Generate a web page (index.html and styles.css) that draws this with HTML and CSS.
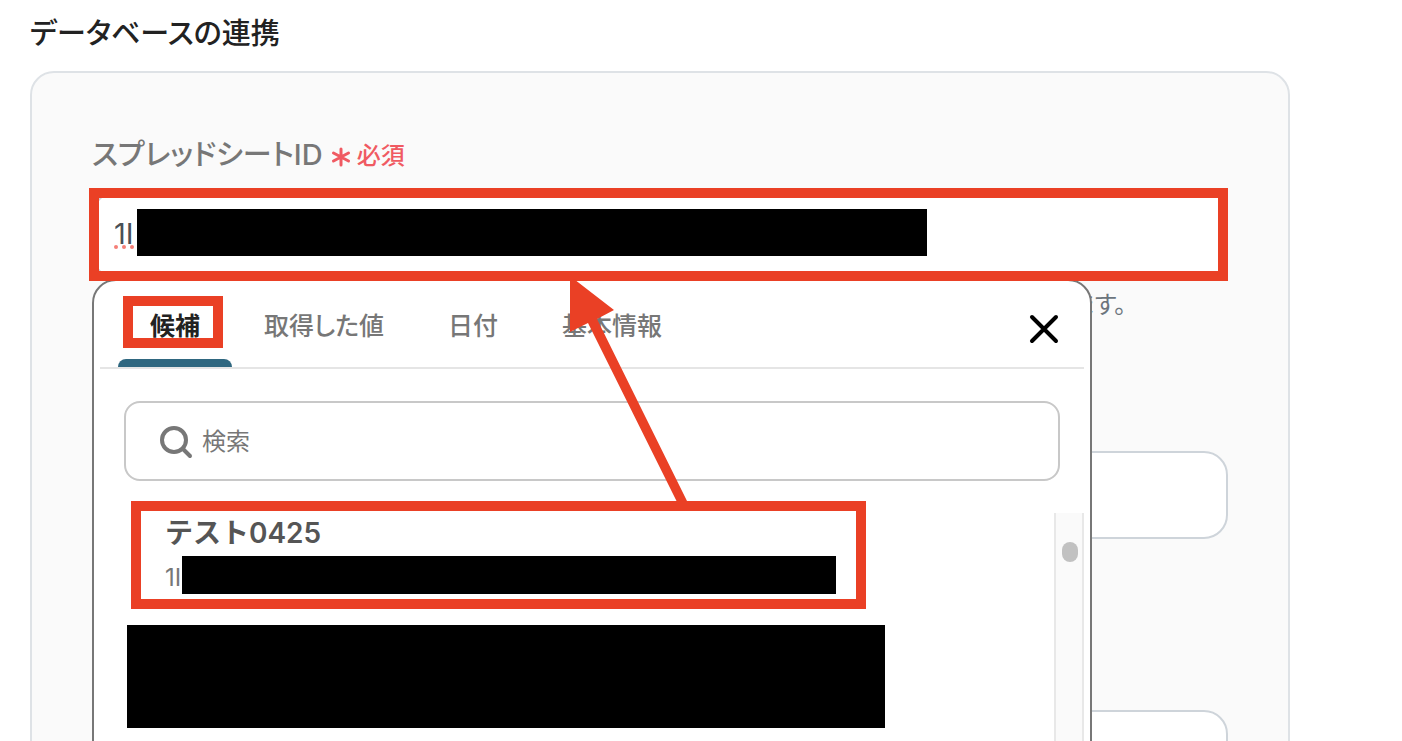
FILE: index.html
```html
<!DOCTYPE html>
<html lang="ja">
<head>
<meta charset="utf-8">
<meta name="viewport" content="width=device-width, initial-scale=1">
<title>データベースの連携</title>
<link rel="stylesheet" href="styles.css">
</head>
<body>
<main class="page">
  <h1 class="page-title">データベースの連携</h1>
  <form class="card">
    <div class="field field-sheet">
      <div class="field-head">
        <label class="field-label" for="sheet-id">スプレッドシートID</label>
        <span class="required">
          <svg class="required-icon" viewBox="0 0 20 20" aria-hidden="true"><path d="M10 2v16M2.5 6l15 8M17.5 6l-15 8"/></svg>
          必須
        </span>
      </div>
      <div class="control">
        <input class="input" id="sheet-id" type="text" value="1I" spellcheck="false">
        <svg class="spell-dots" viewBox="0 0 24 4" aria-hidden="true"><circle cx="4" cy="2" r="2"/><circle cx="12" cy="2" r="2"/><circle cx="20" cy="2" r="2"/></svg>
        <span class="mask mask-input"></span>

        <section class="popup" aria-label="候補">
          <header class="popup-head">
            <div class="tabs" role="tablist">
              <button class="tab tab-active" type="button" role="tab" aria-selected="true">候補</button>
              <button class="tab" type="button" role="tab">取得した値</button>
              <button class="tab" type="button" role="tab">日付</button>
              <button class="tab" type="button" role="tab">基本情報</button>
            </div>
            <button class="close" type="button" aria-label="閉じる">
              <svg class="close-icon" viewBox="0 0 32 32" aria-hidden="true"><path d="M4 4l24 24M28 4L4 28"/></svg>
            </button>
          </header>
          <div class="search">
            <svg class="search-icon" viewBox="0 0 34 34" aria-hidden="true"><circle cx="15" cy="15" r="12"/><path d="M24 24l7 7"/></svg>
            <input class="search-input" type="search" placeholder="検索" aria-label="検索">
          </div>
          <div class="results">
            <ul class="result-list">
              <li><button class="result" type="button">
                <span class="result-name">テスト0425</span>
                <span class="result-id">1I<span class="mask mask-id"></span></span>
              </button></li>
              <li class="mask mask-row"></li>
            </ul>
            <div class="scrollbar"><div class="thumb"></div></div>
          </div>
        </section>

        <span class="mark mark-input"></span>
        <span class="mark mark-tab"></span>
        <span class="mark mark-result"></span>
        <svg class="arrow" viewBox="0 0 120 230" aria-hidden="true"><path d="M0 6L44 40L27 49L117 231L107 232L18 53L0 62Z"/></svg>
      </div>
      <p class="help">ます。</p>
    </div>
    <div class="field"><input class="input" type="text" aria-label="シート名"></div>
    <div class="field"><input class="input" type="text" aria-label="範囲"></div>
  </form>
</main>
</body>
</html>
```
FILE: styles.css
```css
* { box-sizing: border-box; }

body {
  margin: 0;
  background: #fff;
  color: #222;
  font-family: Inter, "Noto Sans CJK JP", sans-serif;
  font-feature-settings: "palt";
}

button, input { font: inherit; font-feature-settings: inherit; }

.page {
  height: 100vh;
  padding: 12px 112px 0 30px;
  overflow: hidden;
}

.page-title {
  margin: 0 0 15px;
  font-size: 29px;
  line-height: 44px;
  font-weight: 500;
}

.card {
  padding: 60px;
  border: 2px solid #dee2e6;
  border-radius: 24px;
  background: #fafafa;
}

.field { margin-bottom: 171px; }
.field-sheet { margin-bottom: 128px; }

.field-head {
  display: flex;
  align-items: center;
  gap: 8px;
  height: 38px;
  margin-bottom: 20px;
}

.field-label {
  color: #777;
  font-size: 29px;
  font-weight: 500;
}

.required {
  display: flex;
  align-items: center;
  gap: 6px;
  padding-top: 2px;
  color: #f05a62;
  font-size: 24px;
  font-weight: 500;
}

.required-icon {
  width: 20px;
  margin-top: 8px;
  fill: none;
  stroke: currentColor;
  stroke-width: 3;
  stroke-linecap: round;
}

.control { position: relative; }

.input {
  display: block;
  width: 100%;
  height: 88px;
  padding: 0 20px 4px;
  border: 2px solid #ced4da;
  border-radius: 24px;
  background: #fff;
  color: #495057;
  font-size: 29px;
}

.help {
  margin: 8px 102px 0 0;
  color: #6c757d;
  font-size: 24px;
  line-height: 36px;
  text-align: right;
}

.mask { background: #000; }

.mask-input {
  position: absolute;
  top: 18px;
  left: 45px;
  width: 790px;
  height: 47px;
}

.spell-dots {
  position: absolute;
  top: 54px;
  left: 20px;
  width: 24px;
  fill: #f57f77;
}

.popup {
  position: absolute;
  top: 100%;
  left: 0;
  width: calc(100% - 136px);
  padding: 0 6px;
  border: 2px solid #777;
  border-radius: 24px;
  background: #fff;
}

.popup-head {
  display: flex;
  align-items: stretch;
  justify-content: space-between;
  height: 88px;
  padding: 0 24px 0 18px;
  border-bottom: 2px solid #e5e5e5;
}

.tabs { display: flex; }

.tab {
  padding: 0 32px;
  border: 0;
  background: none;
  color: #777;
  font-size: 25px;
  font-weight: 500;
}

.tab-active {
  position: relative;
  color: #222;
  font-weight: 700;
}

.tab-active::after {
  content: "";
  position: absolute;
  right: 0;
  bottom: 0;
  left: 0;
  height: 8px;
  border-radius: 8px 8px 0 0;
  background: #2f6780;
}

.close {
  padding: 10px 0 0;
  border: 0;
  background: none;
}

.close-icon {
  display: block;
  width: 32px;
  fill: none;
  stroke: #000;
  stroke-width: 4;
  stroke-linecap: round;
}

.search {
  display: flex;
  align-items: center;
  gap: 9px;
  height: 80px;
  margin: 32px 24px;
  padding: 1px 33px 0;
  border: 2px solid #c8c8c8;
  border-radius: 16px;
}

.search-icon {
  flex: none;
  width: 34px;
  fill: none;
  stroke: #777;
  stroke-width: 4;
  stroke-linecap: round;
}

.search-input {
  flex: 1;
  padding: 0;
  border: 0;
  outline: 0;
  background: none;
  font-size: 24px;
}

.search-input::placeholder { color: #777; opacity: 1; }

.results {
  display: flex;
  justify-content: space-between;
  height: 400px;
}

.result-list {
  flex: 1;
  margin: 0;
  padding: 0 169px 0 27px;
  list-style: none;
}

.result {
  display: flex;
  flex-direction: column;
  justify-content: flex-start;
  width: 100%;
  height: 112px;
  padding: 0 49px 0 38px;
  border: 0;
  background: none;
  text-align: left;
}

.result-name {
  height: 43px;
  color: #555;
  font-size: 28px;
  font-feature-settings: normal;
  line-height: 40px;
  font-weight: 600;
}

.result-id {
  display: flex;
  align-self: stretch;
  gap: 1px;
  color: #777;
  font-size: 24px;
  line-height: 44px;
}

.mask-id { flex: 1; height: 38px; }
.mask-row { height: 103px; }

.scrollbar {
  width: 30px;
  padding: 29px 4px 0 6px;
  border: solid #e8e8e8;
  border-width: 0 2px;
  background: #fafafa;
}

.thumb {
  height: 20px;
  border-radius: 8px;
  background: #c1c1c1;
}

/* Annotations drawn over the form */
.mark {
  position: absolute;
  border: 10px solid #ea4025;
  pointer-events: none;
}

.mark-input { top: -3px; right: 0; bottom: -2px; left: -3px; }
.mark-tab { top: 105px; left: 31px; width: 100px; height: 52px; }
.mark-result { top: 310px; left: 39px; width: 735px; height: 108px; }

.arrow {
  position: absolute;
  top: 79px;
  left: 478px;
  width: 120px;
  overflow: visible;
  fill: #ea4025;
  pointer-events: none;
}
```
